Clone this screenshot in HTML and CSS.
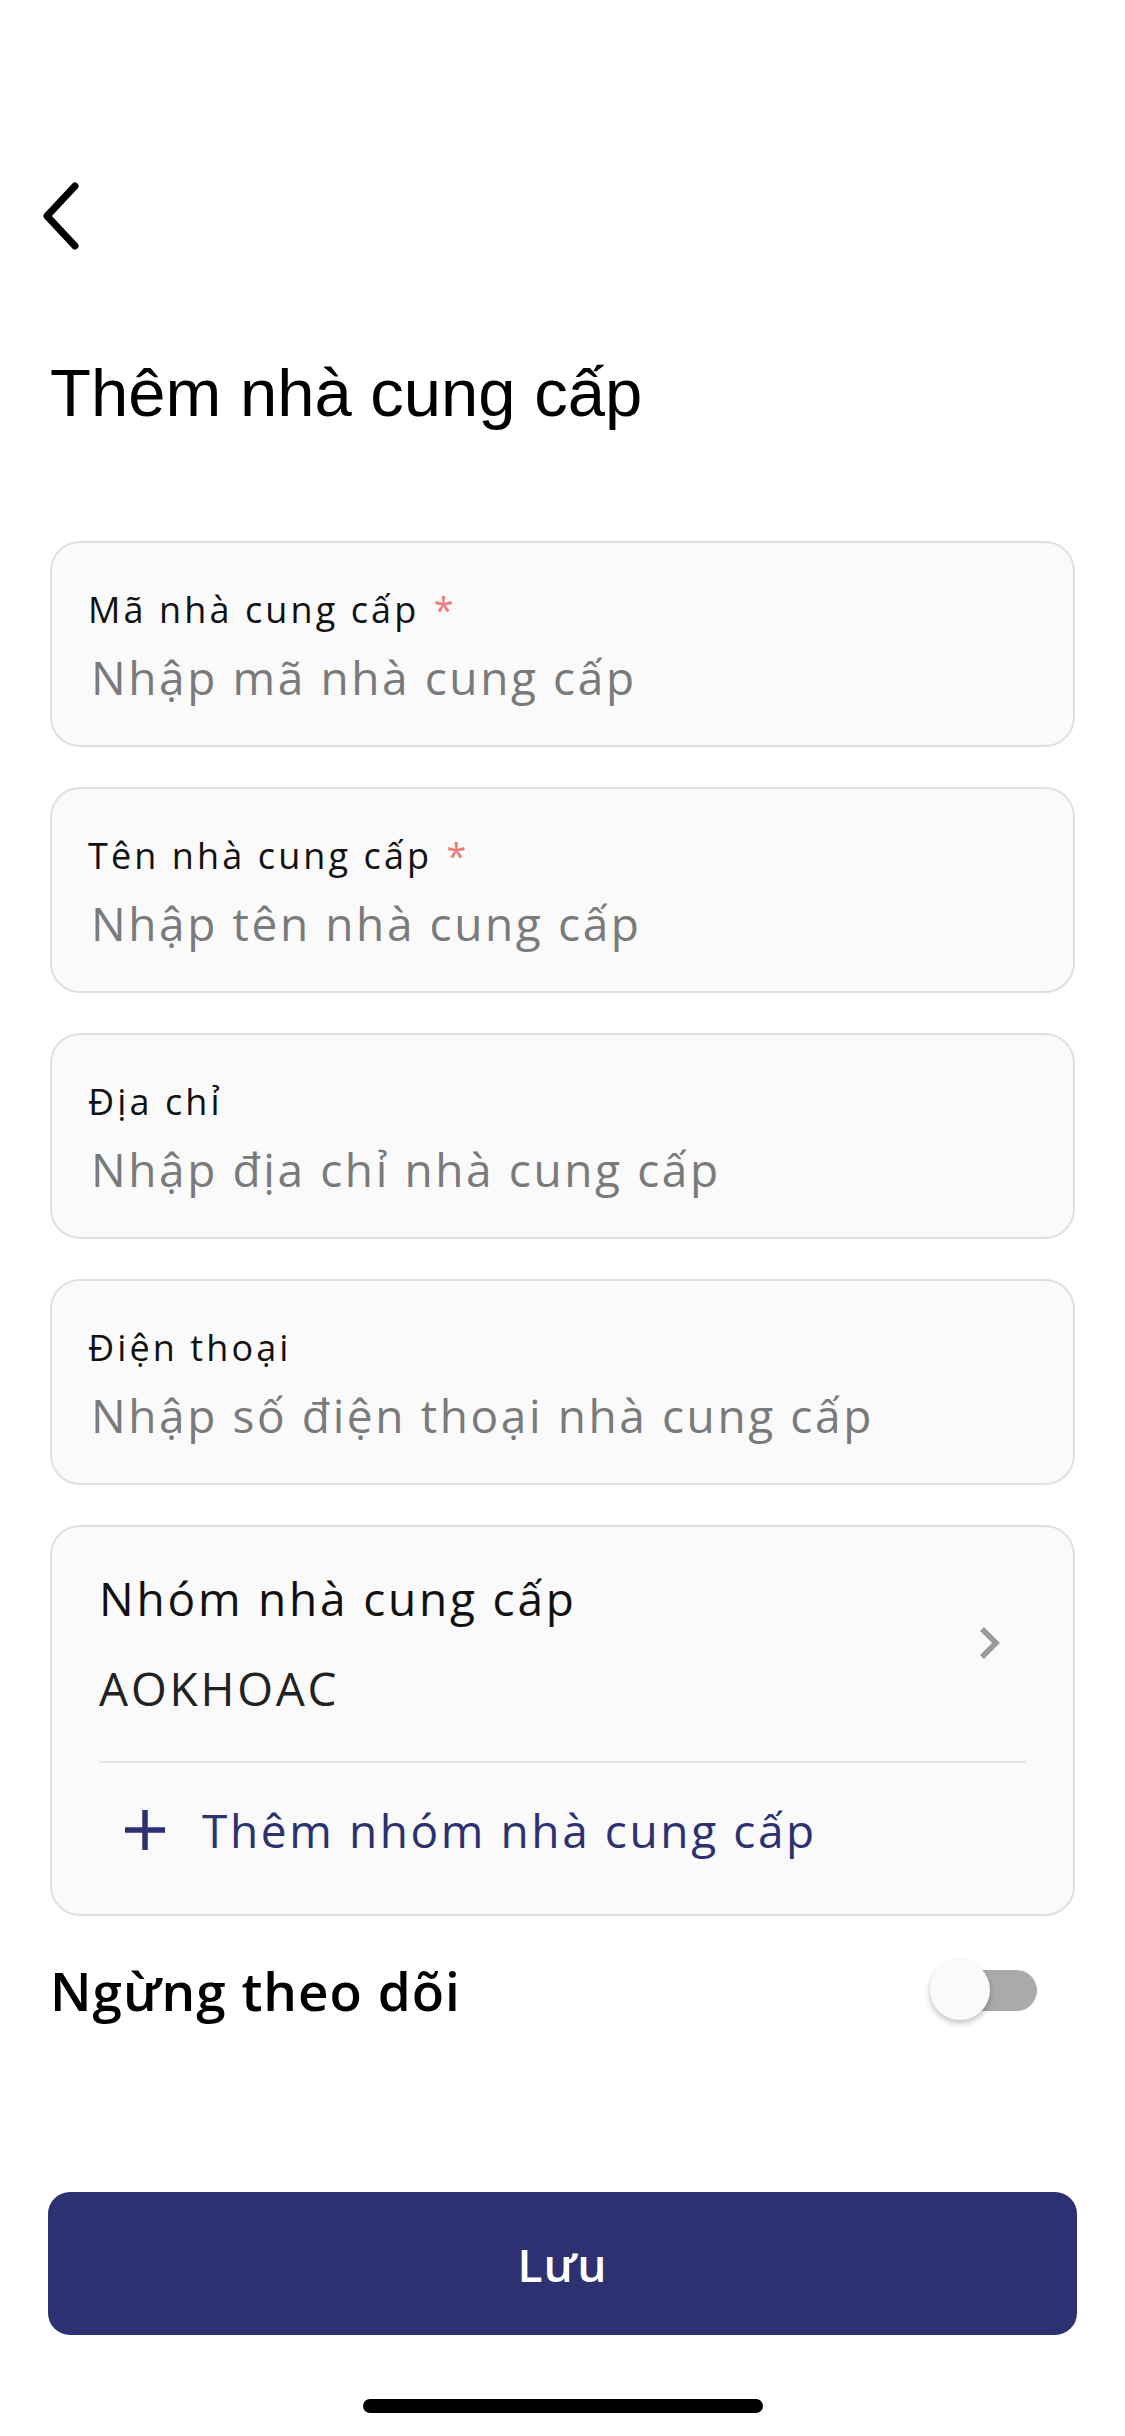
FILE: index.html
```html
<!DOCTYPE html>
<html>
<head>
	<title>Thêm nhà cung cấp</title>
	<link rel="stylesheet" href="styles.css">
</head>
<body>
	<div class="screen">
		<div class="topbar">
			<button class="back-button" aria-label="Quay lại">
				<svg width="40" height="70" viewBox="0 0 40 70">
					<path d="M34 5 L6 35 L34 65" fill="none" stroke="#000" stroke-width="7" stroke-linecap="round" stroke-linejoin="round"/>
				</svg>
			</button>
		</div>

		<h1 class="page-title">Thêm nhà cung cấp</h1>

		<div class="form-list">
			<div class="field">
				<label class="field-label">Mã nhà cung cấp <span class="required">*</span></label>
				<div class="field-input">Nhập mã nhà cung cấp</div>
			</div>
			<div class="field">
				<label class="field-label">Tên nhà cung cấp <span class="required">*</span></label>
				<div class="field-input">Nhập tên nhà cung cấp</div>
			</div>
			<div class="field">
				<label class="field-label">Địa chỉ</label>
				<div class="field-input">Nhập địa chỉ nhà cung cấp</div>
			</div>
			<div class="field">
				<label class="field-label">Điện thoại</label>
				<div class="field-input">Nhập số điện thoại nhà cung cấp</div>
			</div>

			<div class="group-card">
				<div class="group-select">
					<div class="group-text">
						<div class="group-title">Nhóm nhà cung cấp</div>
						<div class="group-value">AOKHOAC</div>
					</div>
					<svg class="chevron" width="24" height="34" viewBox="0 0 24 34">
						<path d="M4 3 L18 17 L4 31" fill="none" stroke="#9a9a9a" stroke-width="5.5"/>
					</svg>
				</div>
				<div class="group-add">
					<svg class="plus" width="44" height="44" viewBox="0 0 44 44">
						<path d="M22 2 V42 M2 22 H42" stroke="#2c3170" stroke-width="5.5"/>
					</svg>
					<span>Thêm nhóm nhà cung cấp</span>
				</div>
			</div>
		</div>

		<div class="follow-row">
			<span class="follow-label">Ngừng theo dõi</span>
			<div class="toggle">
				<div class="toggle-track"></div>
				<div class="toggle-knob"></div>
			</div>
		</div>

		<button class="save-button">Lưu</button>

		<div class="home-indicator"></div>
	</div>
</body>
</html>
```

FILE: styles.css
```css
body {
	margin: 0;
	background-color: #fff;
	font-family: 'Open Sans', 'Noto Sans', sans-serif;
	color: #111;
}

.screen {
	width: 1125px;
	height: 2436px;
	box-sizing: border-box;
	padding: 183px 50px 0 50px;
	display: flex;
	flex-direction: column;
}

.topbar {
	height: 70px;
	display: flex;
	align-items: flex-start;
}

.back-button {
	background: none;
	border: none;
	padding: 0;
	margin-left: -9px;
	margin-top: -2px;
	cursor: pointer;
	display: block;
}

.page-title {
	font-family: 'Liberation Sans', Arial, sans-serif;
	font-weight: 400;
	font-size: 67px;
	line-height: 80px;
	margin: 100px 0 0 0;
	color: #000;
}

.form-list {
	margin-top: 108px;
	display: flex;
	flex-direction: column;
	gap: 40px;
}

.field {
	background-color: #fafafa;
	border: 2.5px solid #e0e0e0;
	border-radius: 30px;
	padding: 45px 36px 40px 36px;
	display: flex;
	flex-direction: column;
}

.field-label {
	font-size: 36px;
	line-height: 44px;
	letter-spacing: 3.1px;
	color: #111;
}

.required {
	color: #f07a7a;
	margin-left: 2px;
}

.field-input {
	margin-top: 17px;
	margin-left: 3px;
	font-size: 46px;
	line-height: 56px;
	letter-spacing: 2.6px;
	color: #7a7a7a;
}

.group-card {
	background-color: #fafafa;
	border: 2.5px solid #e0e0e0;
	border-radius: 30px;
	padding: 0 47px;
}

.group-select {
	display: flex;
	align-items: center;
	justify-content: space-between;
	padding: 43px 24px 45px 0;
	border-bottom: 2px solid #e6e6e6;
}

.group-title,
.group-value {
	font-size: 46px;
	line-height: 56px;
	letter-spacing: 2.8px;
	color: #111;
}

.group-value {
	margin-top: 34px;
	color: #222;
}

.group-add {
	display: flex;
	align-items: center;
	padding: 39px 0 56px 24px;
	font-size: 46px;
	line-height: 56px;
	letter-spacing: 2.6px;
	color: #2c3170;
}

.plus {
	margin-right: 35px;
}

.follow-row {
	margin-top: 42px;
	height: 64px;
	display: flex;
	align-items: center;
	justify-content: space-between;
}

.follow-label {
	font-size: 53px;
	font-weight: 600;
	letter-spacing: 1px;
	color: #000;
}

.toggle {
	position: relative;
	width: 107px;
	height: 60px;
	margin-right: 38px;
}

.toggle-track {
	position: absolute;
	left: 7px;
	top: 10px;
	width: 100px;
	height: 41px;
	border-radius: 21px;
	background-color: #aaa;
}

.toggle-knob {
	position: absolute;
	left: 0;
	top: 0;
	width: 60px;
	height: 60px;
	border-radius: 50%;
	background-color: #fafafa;
	box-shadow: 0 3px 6px rgba(0, 0, 0, 0.25);
}

.save-button {
	margin-top: 170px;
	height: 143px;
	margin-left: -2px;
	margin-right: -2px;
	border: none;
	border-radius: 22px;
	background-color: #2d3172;
	color: #fff;
	font-family: 'Open Sans', sans-serif;
	font-size: 46px;
	font-weight: 600;
	letter-spacing: 1px;
	cursor: pointer;
}

.home-indicator {
	margin: 64px auto 0 auto;
	width: 400px;
	height: 14px;
	border-radius: 7px;
	background-color: #000;
}
```
